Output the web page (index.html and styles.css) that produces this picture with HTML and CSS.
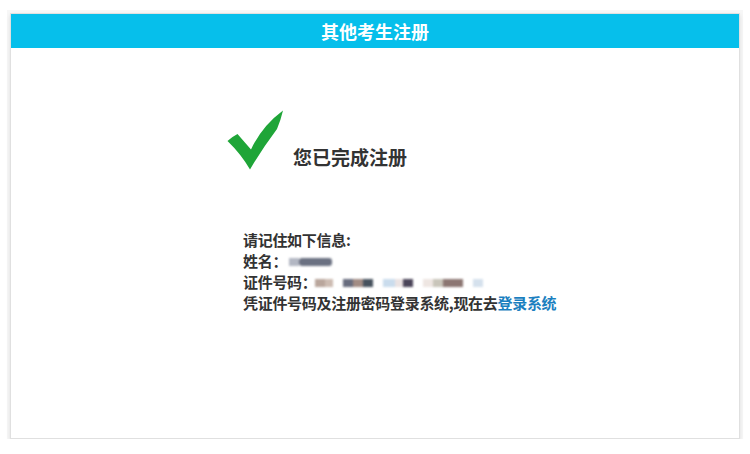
FILE: index.html
```html
<!DOCTYPE html>
<html lang="zh-CN">
<head>
<meta charset="utf-8">
<title>其他考生注册</title>
<link rel="stylesheet" href="styles.css">
</head>
<body>
<div class="card">
  <div class="header">其他考生注册</div>
  <div class="body">
    <div class="success">
      <svg class="check" width="58" height="60" viewBox="0 0 58 60" aria-hidden="true">
        <path d="M1.5,31 Q6.5,26.5 11.5,24 L25,39.5 Q36,16 57,0.5 Q54.5,11 51,19 Q36,39 24,59.5 Q15,44 1.5,31 Z" fill="#1fa538"/>
      </svg>
      <span class="done">您已完成注册</span>
    </div>
    <div class="info">
      <div class="line">请记住如下信息:</div>
      <div class="line">姓名：<span class="mask mask-name"><i class="sw n1"></i><i class="sw n2"></i></span></div>
      <div class="line">证件号码：<span class="mask mask-id"><i class="sw s1"></i><i class="sw s2"></i><i class="gap"></i><i class="sw s3"></i><i class="sw s4"></i><i class="sw s5"></i><i class="gap"></i><i class="sw s6"></i><i class="sw s7"></i><i class="sw s8"></i><i class="gap"></i><i class="sw s9"></i><i class="sw s10"></i><i class="sw s11"></i><i class="gap"></i><i class="sw s12"></i></span></div>
      <div class="line">凭证件号码及注册密码登录系统,现在去<a class="login" href="#">登录系统</a></div>
    </div>
  </div>
</div>
</body>
</html>
```

FILE: styles.css
```css
html, body {
  margin: 0;
  padding: 0;
  background: #ffffff;
}

body {
  font-family: "Noto Sans CJK SC", "Noto Sans", "Liberation Sans", sans-serif;
  color: #333333;
  padding: 13px 10px 0 10px;
}

.card {
  width: 728px;
  height: 424px;
  border: 1px solid #e0e0e0;
  box-shadow: 0 2px 4px rgba(0, 0, 0, 0.10), 0 0 0 3px #f7f7f7;
  background: #ffffff;
  display: flex;
  flex-direction: column;
}

.header {
  height: 34px;
  background: #06bfeb;
  color: #ffffff;
  font-weight: 700;
  font-size: 18px;
  line-height: 34px;
  text-align: center;
}

.body {
  flex: 1;
  display: flex;
  flex-direction: column;
}

.success {
  display: flex;
  align-items: flex-end;
  margin: 62px 0 0 215px;
}

.check {
  display: block;
}

.done {
  font-size: 19px;
  font-weight: 700;
  line-height: 24px;
  margin-left: 9px;
  margin-bottom: 1px;
  color: #333333;
}

.info {
  margin: 59px 0 0 232px;
  font-size: 15px;
  font-weight: 700;
  line-height: 21px;
  letter-spacing: -0.3px;
}

.line {
  white-space: nowrap;
}

.mask {
  display: inline-flex;
  vertical-align: middle;
  height: 8px;
  filter: blur(0.8px);
  position: relative;
  top: -1px;
}

.mask-name {
  margin-left: 2px;
}

.mask-id {
  margin-left: -2px;
}

.sw {
  display: block;
  height: 8px;
  width: 10px;
}

.gap {
  display: block;
  width: 10px;
}

.n1 { width: 10px; background: #b3b7c3; }
.n2 { width: 33px; background: #6b7182; border-radius: 3px; }

.s1 { width: 10px; background: #b9a69c; }
.s2 { width: 8px; background: #cdbcb2; }
.s3 { width: 10px; background: #686c7e; }
.s4 { width: 10px; background: #a28c84; }
.s5 { width: 10px; background: #47525e; }
.s6 { width: 12px; background: #cadced; }
.s7 { width: 8px; background: #ebe3e3; }
.s8 { width: 10px; background: #4b4559; }
.s9 { width: 10px; background: #eee6e2; }
.s10 { width: 10px; background: #c9c5ba; }
.s11 { width: 20px; background: #8c7672; }
.s12 { width: 10px; background: #d5e1ed; }

.login {
  color: #1b7fc0;
  text-decoration: none;
}
```
